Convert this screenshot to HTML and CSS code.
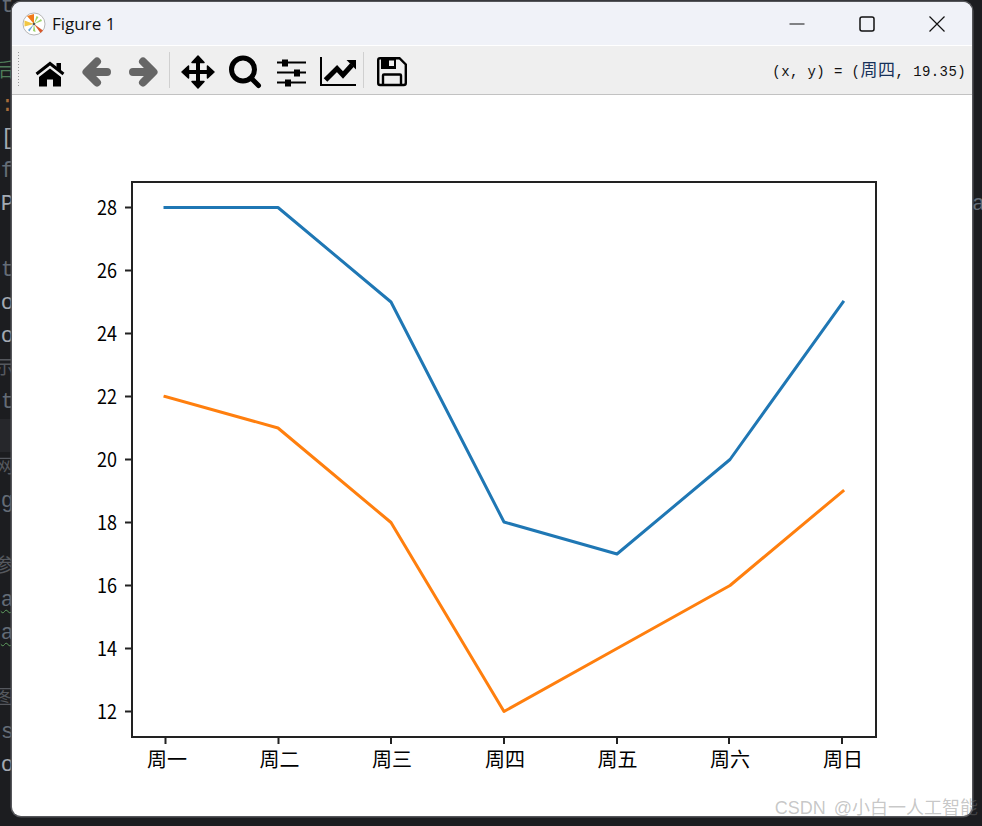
FILE: index.html
```html
<!DOCTYPE html>
<html lang="zh">
<head>
<meta charset="utf-8">
<title>Figure 1</title>
<link rel="stylesheet" href="styles.css">
</head>
<body>
<div class="desktop">
  <div class="gutter gutter-left">
    <div class="code c-dim">t</div>
    <div class="code">&nbsp;</div>
    <div class="code c-green cjk">后</div>
    <div class="code c-orange">:</div>
    <div class="code c-light">[</div>
    <div class="code c-dim">f</div>
    <div class="code c-light">:P</div>
    <div class="code">&nbsp;</div>
    <div class="code c-dim">t</div>
    <div class="code c-light">.o</div>
    <div class="code c-light">.o</div>
    <div class="code c-faint cjk">示</div>
    <div class="code c-dim">t</div>
    <div class="code band">&nbsp;</div>
    <div class="code c-faint cjk">网</div>
    <div class="code c-dim">g</div>
    <div class="code">&nbsp;</div>
    <div class="code c-faint cjk">参</div>
    <div class="code c-dim squiggle">a</div>
    <div class="code c-dim squiggle">a</div>
    <div class="code">&nbsp;</div>
    <div class="code c-faint cjk">图</div>
    <div class="code c-dim">s</div>
    <div class="code c-light">o</div>
  </div>

  <main class="window">
    <header class="titlebar">
      <svg class="app-icon" viewBox="23 10 24 24" width="24" height="24" aria-hidden="true">
        <circle cx="35" cy="22" r="11" class="logo-disc"/>
        <path d="M35 22 L35 12 L28 14 Z" class="logo-orange"/>
        <path d="M35 22 L25.500 18.500 L25.500 24.500 Z" class="logo-yellow"/>
        <path d="M35 22 L37.500 14 L39.500 15 Z" class="logo-lime"/>
        <path d="M35 22 L42 17 L43 19 Z" class="logo-lime"/>
        <path d="M35 22 L41.500 31 L44 28.500 Z" class="logo-red"/>
        <path d="M35 22 L34 29 L36.500 30 Z" class="logo-lime"/>
        <path d="M35 22 L29 28 L30.500 29.500 Z" class="logo-blue"/>
        <circle cx="35" cy="22" r="1.300" class="logo-hub"/>
      </svg>
      <span class="title">Figure 1</span>
      <div class="controls">
        <div class="ctrl">
          <svg viewBox="0 0 16 16" width="16" height="16" aria-hidden="true"><path d="M0.500 8H15.500" class="ctrl-line"/></svg>
        </div>
        <div class="ctrl">
          <svg viewBox="0 0 16 16" width="16" height="16" aria-hidden="true"><rect x="1" y="1" width="14" height="14" rx="2" class="ctrl-box"/></svg>
        </div>
        <div class="ctrl">
          <svg viewBox="0 0 16 16" width="16" height="16" aria-hidden="true"><path d="M0.500 0.500L15.500 15.500M15.500 0.500L0.500 15.500" class="ctrl-line"/></svg>
        </div>
      </div>
    </header>

    <nav class="toolbar">
      <span class="grip"></span>
      <svg class="tool" viewBox="27 46 46 48" aria-hidden="true">
        <path d="M36.500 74 L50 63.500 L63.500 74" class="i-stroke i-roof"/>
        <rect x="56.500" y="63" width="4.500" height="7"/>
        <path d="M50 68.500 L61 77 V86.500 H53 V79.500 H47 V86.500 H39 V77 Z"/>
      </svg>
      <svg class="tool" viewBox="73 46 46 48" aria-hidden="true">
        <path d="M87 72 H107 M97 61.500 L86.500 72 L97 82.500" class="i-nav"/>
      </svg>
      <svg class="tool" viewBox="119 46 46 48" aria-hidden="true">
        <path d="M153 72 H133 M143 61.500 L153.500 72 L143 82.500" class="i-nav"/>
      </svg>
      <span class="sep"></span>
      <svg class="tool" viewBox="175 46 46 48" aria-hidden="true">
        <path d="M196 60 H200 V70 H210 V74 H200 V84 H196 V74 H186 V70 H196 Z"/>
        <path d="M198 56 L204 62.500 H192 Z M198 88 L204 81.500 H192 Z M182 72 L188.500 66 V78 Z M214 72 L207.500 66 V78 Z" class="i-head"/>
      </svg>
      <svg class="tool" viewBox="221 46 46 48" aria-hidden="true">
        <circle cx="243" cy="69.500" r="11.500" class="i-stroke i-lens"/>
        <path d="M252 79 L258.500 85.500" class="i-stroke i-lens i-round"/>
      </svg>
      <svg class="tool" viewBox="267 46 46 48" aria-hidden="true">
        <path d="M277 62.500 H306 M277 72.500 H306 M277 82.500 H306" class="i-stroke i-thin"/>
        <rect x="282" y="59.500" width="6" height="7"/>
        <rect x="294" y="69.500" width="6" height="7"/>
        <rect x="285" y="79.500" width="6" height="7"/>
      </svg>
      <svg class="tool" viewBox="313 46 46 48" aria-hidden="true">
        <path d="M321 57 V85 H356" class="i-stroke i-thin"/>
        <path d="M325.500 80 L337 68.500 L343 75 L352 65" class="i-stroke i-trend"/>
        <path d="M346.500 60 H356 V69.500 Z"/>
      </svg>
      <span class="sep"></span>
      <svg class="tool" viewBox="370 46 46 48" aria-hidden="true">
        <path d="M381 58.200 H400.500 L406.800 64.500 V83 Q406.800 85 404.800 85 H381 Q379.200 85 379.200 83 V60 Q379.200 58.200 381 58.200 Z" class="i-stroke i-save"/>
        <path d="M382 59 H397 V69 H382 Z M390 60.500 V66 H395 V60.500 Z" class="i-slot"/>
        <path d="M384 85 V75.500 Q384 74.500 385 74.500 H401 Q402 74.500 402 75.500 V85" class="i-stroke i-save"/>
      </svg>
      <span class="coords">(x, y) = (<span class="coords-cjk">周四</span>, 19.35)</span>
    </nav>

    <svg class="plot" viewBox="12 95 960 721" width="960" height="721" role="img" aria-label="Figure 1 line chart">
      <rect x="132" y="182" width="744" height="555" class="spine"/>
      <path class="tick" d="M125 207.500H132M125 270.500H132M125 333.500H132M125 396.500H132M125 459.500H132M125 522.500H132M125 585.500H132M125 648.500H132M125 711.500H132"/>
      <path class="tick" d="M165.500 737V744M278.500 737V744M391 737V744M504 737V744M617 737V744M729 737V744M842 737V744"/>
      <polyline class="series s-blue" points="165,207.500 278,207.500 391,302 504,522 617,554 730,459.500 843,302"/>
      <polyline class="series s-orange" points="165,396.500 278,428 391,522.500 504,711.500 617,648.500 730,585.500 843,491"/>
      <g class="ylabels">
        <text x="117" y="215" textLength="20" lengthAdjust="spacingAndGlyphs">28</text>
        <text x="117" y="278" textLength="20" lengthAdjust="spacingAndGlyphs">26</text>
        <text x="117" y="341" textLength="20" lengthAdjust="spacingAndGlyphs">24</text>
        <text x="117" y="404" textLength="20" lengthAdjust="spacingAndGlyphs">22</text>
        <text x="117" y="467" textLength="20" lengthAdjust="spacingAndGlyphs">20</text>
        <text x="117" y="530" textLength="20" lengthAdjust="spacingAndGlyphs">18</text>
        <text x="117" y="593" textLength="20" lengthAdjust="spacingAndGlyphs">16</text>
        <text x="117" y="656" textLength="20" lengthAdjust="spacingAndGlyphs">14</text>
        <text x="117" y="719" textLength="20" lengthAdjust="spacingAndGlyphs">12</text>
      </g>
      <g class="xlabels">
        <text x="167" y="767">周一</text>
        <text x="279.500" y="767">周二</text>
        <text x="392" y="767">周三</text>
        <text x="505" y="767">周四</text>
        <text x="617.500" y="767">周五</text>
        <text x="730" y="767">周六</text>
        <text x="843" y="767">周日</text>
      </g>
    </svg>
  </main>

  <div class="gutter gutter-right">
    <div class="code">&nbsp;</div>
    <div class="code">&nbsp;</div>
    <div class="code">&nbsp;</div>
    <div class="code">&nbsp;</div>
    <div class="code">&nbsp;</div>
    <div class="code">&nbsp;</div>
    <div class="code c-dim">ar</div>
  </div>

  <div class="watermark">CSDN @小白一人工智能</div>
</div>
</body>
</html>
```
FILE: styles.css
```css
* { box-sizing: border-box; }

html, body {
  margin: 0;
  padding: 0;
  width: 982px;
  height: 826px;
  overflow: hidden;
  background: #1c1d20;
}

.desktop {
  position: relative;
  display: flex;
  width: 982px;
  height: 826px;
  overflow: hidden;
}

/* code editor peeking out behind the window */
.gutter {
  flex: none;
  overflow: hidden;
  margin-top: -10px;
  height: 836px;
  font-family: "Liberation Mono", "Noto Sans CJK SC", monospace;
  font-size: 22px;
}
.gutter-left { width: 14px; margin-right: -2px; }
.gutter-right { width: 10px; }

.code {
  display: flex;
  height: 33px;
  line-height: 33px;
  white-space: nowrap;
}
.gutter-left .code { justify-content: flex-end; }
.band { background: #26272b; }
.cjk { font-size: 19px; }
.c-green { color: #4f7d5a; }
.c-orange { color: #a86c3a; }
.c-light { color: #a4aab2; }
.c-dim { color: #646c76; }
.c-faint { color: #55585e; }
.squiggle {
  text-decoration: underline wavy #5f9e5f 1px;
  text-underline-offset: 3px;
}

/* the figure window */
.window {
  position: relative;
  z-index: 1;
  flex: none;
  display: flex;
  flex-direction: column;
  width: 960px;
  height: 814px;
  margin-top: 2px;
  overflow: hidden;
  background: #fff;
  border-radius: 9px;
  box-shadow: 0 0 0 1.500px #55565a;
}

.titlebar {
  flex: none;
  display: flex;
  align-items: center;
  height: 44px;
  padding-left: 10px;
  background: #f0f2f8;
  border-bottom: 1px solid #fff;
}
.app-icon { flex: none; }
.title {
  margin-left: 6px;
  font-family: "Open Sans", "Noto Sans", sans-serif;
  font-size: 17px;
  color: #111;
}
.controls { display: flex; margin-left: auto; }
.ctrl {
  display: flex;
  align-items: center;
  justify-content: center;
  width: 70px;
  height: 43px;
}
.ctrl svg { display: block; }
.ctrl-line { fill: none; stroke: #111; stroke-width: 1.200; }
.ctrl-box { fill: none; stroke: #111; stroke-width: 1.500; }

.toolbar {
  flex: none;
  display: flex;
  align-items: stretch;
  height: 49px;
  background: #efefef;
  border-bottom: 1px solid #c2c2c2;
  padding-left: 5px;
}
.grip {
  flex: none;
  width: 3px;
  margin: 5px 7px 6px 0;
  background: radial-gradient(circle, #9a9a9a 0.8px, transparent 1px) 0 0 / 3px 3px;
}
.tool {
  flex: none;
  display: block;
  width: 46px;
  height: 48px;
  fill: #000;
}
.sep {
  flex: none;
  width: 1px;
  margin: 6px 5px 6px 4px;
  background: #d0d0d0;
}

.i-stroke { fill: none; stroke: #000; }
.i-roof { stroke-width: 3; }
.i-nav {
  fill: none;
  stroke: #666;
  stroke-width: 8;
  stroke-linecap: round;
  stroke-linejoin: round;
}
.i-head { stroke: #000; stroke-width: 1.500; stroke-linejoin: round; }
.i-lens { stroke-width: 5; }
.i-round { stroke-linecap: round; }
.i-thin { stroke-width: 2; }
.i-trend { stroke-width: 5; }
.i-save { stroke-width: 2.400; }
.i-slot { fill-rule: evenodd; }

.coords {
  margin-left: auto;
  padding-right: 6px;
  padding-bottom: 3px;
  align-self: center;
  font-family: "Liberation Mono", "Noto Sans CJK SC", monospace;
  font-size: 14px;
  letter-spacing: 0.4px;
  color: #111;
  white-space: pre;
}
.coords-cjk { font-family: "Noto Sans CJK SC", sans-serif; font-size: 17px; letter-spacing: 0.6px; color: #16305a; }

/* matplotlib logo */
.logo-disc { fill: #fff; stroke: #b5b5b5; stroke-width: 1; }
.logo-orange { fill: #f07a1a; }
.logo-yellow { fill: #f2c744; }
.logo-lime { fill: #9ed36a; }
.logo-red { fill: #d9582b; }
.logo-blue { fill: #6aa7d8; }
.logo-hub { fill: #555; }

/* chart */
.plot { flex: none; display: block; }
.spine { fill: none; stroke: #222; stroke-width: 2; }
.tick { fill: none; stroke: #222; stroke-width: 2; }
.series { fill: none; stroke-width: 3; stroke-linejoin: round; stroke-linecap: square; }
.s-blue { stroke: #1f77b4; }
.s-orange { stroke: #ff7f0e; }
.ylabels text {
  font-family: "Noto Sans CJK SC", sans-serif;
  font-size: 20px;
  text-anchor: end;
  fill: #000;
}
.xlabels text {
  font-family: "Noto Sans CJK SC", sans-serif;
  font-size: 20px;
  text-anchor: middle;
  fill: #000;
}

.watermark {
  position: absolute;
  z-index: 2;
  right: 4px;
  bottom: 7px;
  font-family: "Liberation Sans", "Noto Sans CJK SC", sans-serif;
  font-size: 18px;
  line-height: 22px;
  word-spacing: 3px;
  color: rgba(120, 120, 120, 0.42);
  white-space: nowrap;
}
```
